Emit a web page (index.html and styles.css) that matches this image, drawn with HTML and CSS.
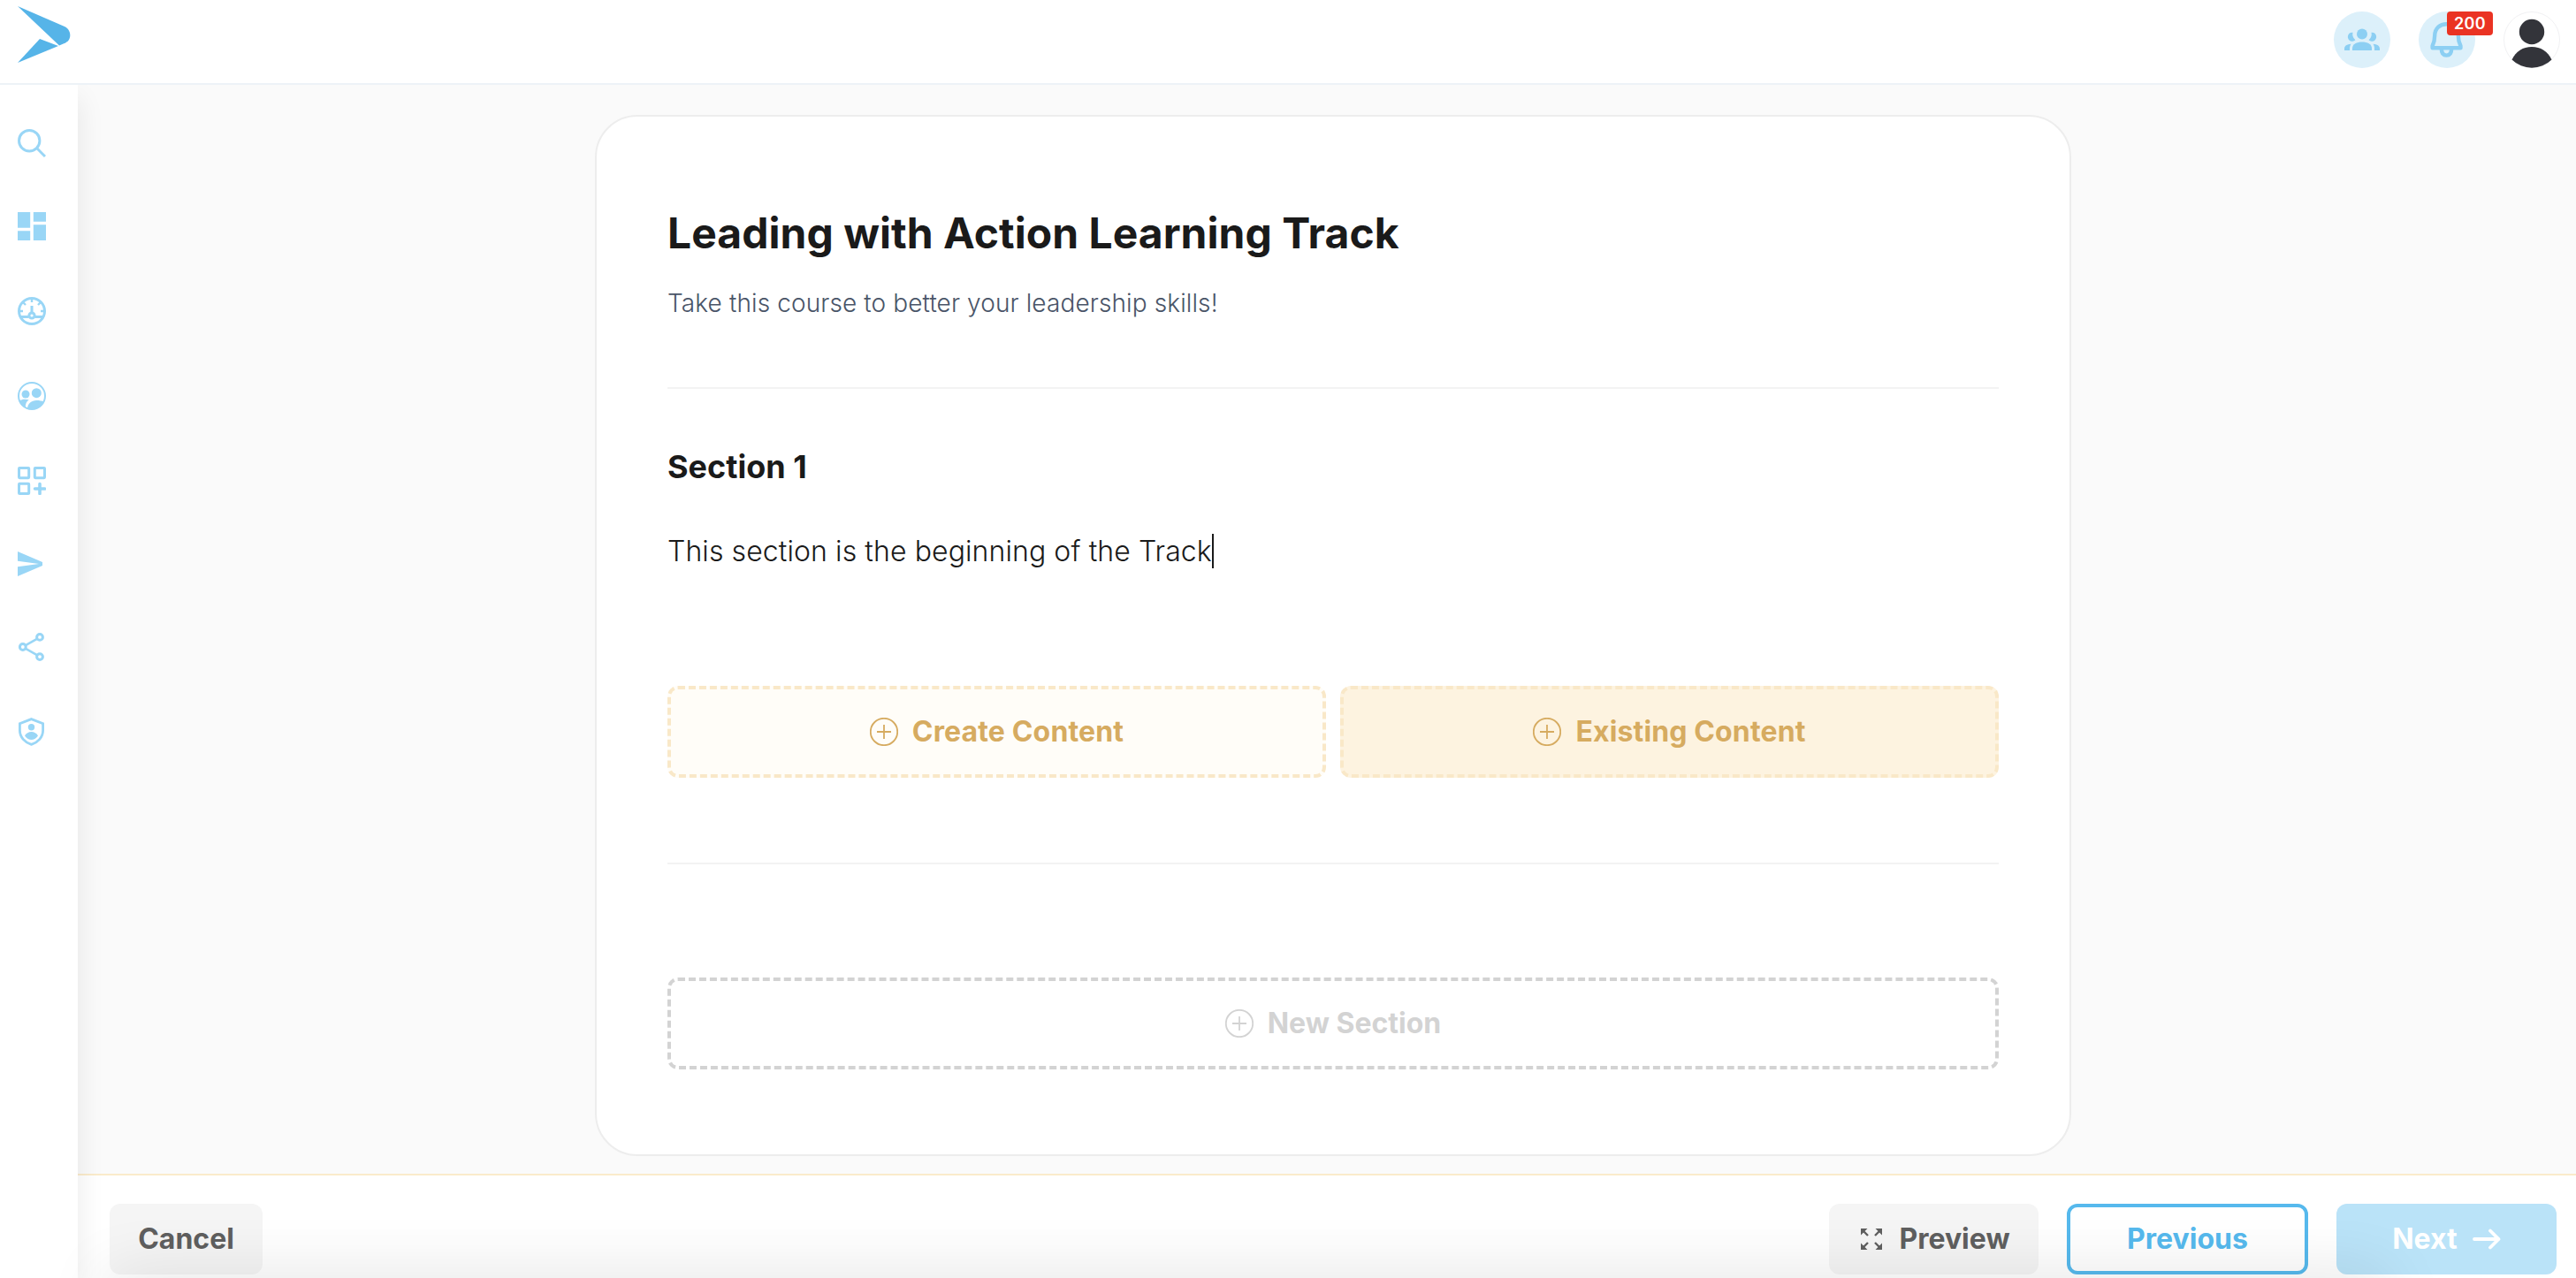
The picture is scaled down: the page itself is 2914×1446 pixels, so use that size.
FILE: index.html
```html
<!DOCTYPE html>
<html lang="en">
<head>
    <meta charset="UTF-8">
    <title>Leading with Action Learning Track</title>
    <link rel="stylesheet" href="styles.css">
</head>
<body>

    <header class="topbar">
        <a href="#" class="logo">
            <svg width="60" height="66" viewBox="0 0 60 66" fill="#56b4e8">
                <path d="M0 0 L53 23 C57 25 59.3 28.500 59.300 33 C59.300 37 57 40 54 41.500 L47 44.500 Z"/>
                <path d="M25 37 L46 45 L0 64 Z"/>
            </svg>
        </a>
        <div class="topbar-actions">
            <button class="round-button">
                <svg width="40" height="26" viewBox="0 0 40 26" fill="#8ccff3">
                    <circle cx="20" cy="6.500" r="6"/>
                    <path d="M9 25 V22.500 C9 18 14 15.500 20 15.500 S31 18 31 22.500 V25 Z"/>
                    <path d="M9.500 4.800 A5 5 0 1 0 12.400 13.300 A8.500 8.500 0 0 1 9.500 4.800 Z"/>
                    <path d="M30.500 4.800 A5 5 0 1 1 27.600 13.300 A8.500 8.500 0 0 0 30.500 4.800 Z"/>
                    <path d="M0 25 V23 C0 20 3 18 7.500 17.800 C6.500 19.500 6 21 6 23 V25 Z"/>
                    <path d="M40 25 V23 C40 20 37 18 32.500 17.800 C33.500 19.500 34 21 34 23 V25 Z"/>
                </svg>
            </button>
            <button class="round-button">
                <svg width="38" height="40" viewBox="0 0 38 40" fill="none" stroke="#8ccff3" stroke-width="4.400" stroke-linejoin="round">
                    <path d="M18.500 2.200 C11 2.200 5.500 7 5.200 15 C5.200 21 4.500 23 2.600 27 V29.300 H34.500 V27 C32.500 23 31.800 21 31.800 15 C31.500 7 26 2.200 18.500 2.200 Z"/>
                    <path d="M12.800 30 C12.800 35 15 37.600 18.500 37.600 S24.200 35 24.200 30"/>
                </svg>
                <span class="badge">200</span>
            </button>
            <button class="avatar">
                <svg width="64" height="64" viewBox="0 0 64 64">
                    <circle cx="32" cy="32" r="31.500" fill="#fff" stroke="#f1f1f3"/>
                    <circle cx="32" cy="23" r="14.200" fill="#33343a"/>
                    <path d="M9.500 54.500 C14 45 22 40 32 40 S50 45 54.500 54.500 A32 32 0 0 1 9.500 54.500 Z" fill="#33343a"/>
                </svg>
            </button>
        </div>
    </header>

    <div class="layout">
        <nav class="sidebar">
            <a href="#">
                <svg width="32" height="32" viewBox="0 0 32 32" fill="none" stroke="#99d6f6" stroke-width="3">
                    <circle cx="13.200" cy="13.200" r="11.700"/>
                    <path d="M21.500 21.500 L31 31"/>
                </svg>
            </a>
            <a href="#">
                <svg width="32" height="32" viewBox="0 0 32 32" fill="#99d6f6">
                    <path d="M0 0 H14.200 V17.800 H0 Z M17.800 0 H32 V10.700 H17.800 Z M17.800 14.200 H32 V32 H17.800 Z M0 21.300 H14.200 V32 H0 Z"/>
                </svg>
            </a>
            <a href="#">
                <svg width="32" height="32" viewBox="0 0 32 32" fill="none" stroke="#99d6f6" stroke-width="3">
                    <circle cx="16" cy="16" r="14.500"/>
                    <circle cx="16" cy="21" r="3.100"/>
                    <path d="M16 10 V18 M3 22.500 H12.500 M19.500 22.500 H29"/>
                    <path d="M16 2 V6 M2 16 H6 M26 16 H30 M6 6 L9 9 M26 6 L23 9" stroke-width="2.400"/>
                </svg>
            </a>
            <a href="#">
                <svg width="32" height="32" viewBox="0 0 32 32" fill="#99d6f6">
                    <circle cx="16" cy="16" r="15" fill="none" stroke="#99d6f6" stroke-width="2"/>
                    <circle cx="9" cy="14" r="4.500"/>
                    <circle cx="21.300" cy="12.700" r="5.500"/>
                    <path d="M2 21.500 C5 19.500 9 19.500 12.700 20.500 C9.800 22.500 8.700 25 8.700 29.500 C5.500 27.500 3 25 2 21.500 Z"/>
                    <path d="M11 30 C11.500 24.500 15.500 21 21.300 21 C24.500 21 27.500 21.500 29.500 22.500 C26.500 30 18 33 11 30 Z"/>
                </svg>
            </a>
            <a href="#">
                <svg width="32" height="32" viewBox="0 0 32 32" fill="none" stroke="#99d6f6" stroke-width="3">
                    <rect x="1.500" y="1.500" width="11.200" height="11.200" rx=".6"/>
                    <rect x="19.300" y="1.500" width="11.200" height="11.200" rx=".6"/>
                    <rect x="1.500" y="19.300" width="11.200" height="11.200" rx=".6"/>
                    <path d="M25 19.500 V30.500 M19.500 25 H30.500" stroke-width="3.600" stroke-linecap="round"/>
                </svg>
            </a>
            <a href="#">
                <svg width="32" height="28" viewBox="0 0 32 28" fill="#99d6f6">
                    <path d="M0 0 L28 12 V16 L0 28 V17.200 L24 14 L0 10.800 Z"/>
                </svg>
            </a>
            <a href="#">
                <svg width="32" height="32" viewBox="0 0 32 32" fill="none" stroke="#99d6f6" stroke-width="3">
                    <circle cx="5.800" cy="16" r="3.400"/>
                    <circle cx="25" cy="4.900" r="3.400"/>
                    <circle cx="25" cy="27.100" r="3.400"/>
                    <path d="M9 14.200 L21.800 6.800 M9 17.800 L21.800 25.200" stroke-width="2.600"/>
                </svg>
            </a>
            <a href="#">
                <svg width="32" height="32" viewBox="0 0 32 32" fill="#99d6f6">
                    <path d="M15.500 1.600 L28.600 6.600 V14.500 C28.600 22 23 28 15.500 30.400 C8 28 2.400 22 2.400 14.500 V6.600 Z" fill="none" stroke="#99d6f6" stroke-width="2.800"/>
                    <circle cx="15.500" cy="10.800" r="3.700"/>
                    <path d="M8 20.500 C9.500 17.500 12.500 16 15.500 16 S21.500 17.500 23 20.500 C21 23.500 18 25 15.500 25 S10 23.500 8 20.500 Z"/>
                </svg>
            </a>
        </nav>

        <div class="content">
            <main class="page">
                <div class="card">
                    <h1>Leading with Action Learning Track</h1>
                    <p class="description">Take this course to better your leadership skills!</p>
                    <hr>
                    <h2>Section 1</h2>
                    <p class="section-text">This section is the beginning of the Track<span class="caret"></span></p>
                    <div class="content-buttons">
                        <button class="dashed create">
                            <svg class="plus" width="32" height="32" viewBox="0 0 32 32"><circle cx="16" cy="16" r="15.200"/><path d="M16 8 V24 M8 16 H24"/></svg>
                            <span>Create Content</span>
                        </button>
                        <button class="dashed existing">
                            <svg class="plus" width="32" height="32" viewBox="0 0 32 32"><circle cx="16" cy="16" r="15.200"/><path d="M16 8 V24 M8 16 H24"/></svg>
                            <span>Existing Content</span>
                        </button>
                    </div>
                    <hr>
                    <button class="dashed new-section">
                        <svg class="plus" width="32" height="32" viewBox="0 0 32 32"><circle cx="16" cy="16" r="15.200"/><path d="M16 8 V24 M8 16 H24"/></svg>
                        <span>New Section</span>
                    </button>
                </div>
            </main>

            <footer class="footer">
                <button class="btn btn-gray"><span>Cancel</span></button>
                <div class="footer-right">
                    <button class="btn btn-gray btn-preview">
                        <svg width="24" height="24" viewBox="0 0 24 24" fill="#5f5f5f" stroke="#5f5f5f" stroke-width="2.400">
                            <path d="M0 0 H7.500 L0 7.500 Z M24 0 V7.500 L16.500 0 Z M0 24 V16.500 L7.500 24 Z M24 24 H16.500 L24 16.500 Z" stroke="none"/>
                            <path d="M3 3 L8 8 M21 3 L16 8 M3 21 L8 16 M21 21 L16 16"/>
                        </svg>
                        <span>Preview</span>
                    </button>
                    <button class="btn btn-outline"><span>Previous</span></button>
                    <button class="btn btn-next">
                        <span>Next</span>
                        <svg width="32" height="24" viewBox="0 0 32 24" fill="none" stroke="#fff" stroke-width="3.800" stroke-linecap="round" stroke-linejoin="round">
                            <path d="M2 12 H29.500 M20 2.500 L29.500 12 L20 21.500"/>
                        </svg>
                    </button>
                </div>
            </footer>
        </div>
    </div>

    <div class="bottom-shade"></div>

</body>
</html>
```
FILE: styles.css
```css
* {
    box-sizing: border-box;
}

body {
    font-family: Inter, sans-serif;
    margin: 0;
    height: 100vh;
    display: flex;
    flex-direction: column;
    overflow: hidden;
    background: #fafafa;
    color: #1a1a1a;
}

button {
    font-family: inherit;
    border: none;
    padding: 0;
    cursor: pointer;
}

svg {
    display: block;
    flex-shrink: 0;
}

/* Top bar */
.topbar {
    height: 96px;
    flex-shrink: 0;
    display: flex;
    justify-content: space-between;
    align-items: flex-start;
    padding: 0 18px 0 20px;
    background: #fff;
    border-bottom: 2px solid #edf2f7;
    position: relative;
    z-index: 3;
}

.logo {
    margin-top: 7px;
}

.topbar-actions {
    display: flex;
    gap: 32px;
    margin-top: 13px;
}

.round-button {
    width: 64px;
    height: 64px;
    border-radius: 50%;
    background: #dcf0fa;
    display: flex;
    justify-content: center;
    align-items: center;
    position: relative;
}

.badge {
    position: absolute;
    top: 0;
    left: 32px;
    width: 52px;
    height: 27px;
    border-radius: 4px;
    background: #ea3323;
    color: #fff;
    font-size: 18px;
    font-weight: 600;
    line-height: 27px;
    letter-spacing: 0.4px;
    text-align: center;
}

.avatar {
    background: none;
}

/* Layout */
.layout {
    flex: 1;
    display: flex;
    min-height: 0;
}

.sidebar {
    width: 88px;
    flex-shrink: 0;
    display: flex;
    flex-direction: column;
    gap: 64px;
    padding: 50px 0 0 20px;
    background: #fff;
    box-shadow: 0 16px 32px rgba(0, 0, 0, 0.09);
    position: relative;
    z-index: 2;
}

.sidebar a:first-child {
    margin-bottom: -2px;
}

.content {
    flex: 1;
    display: flex;
    flex-direction: column;
}

.page {
    flex: 1;
    display: flex;
    justify-content: center;
    align-items: flex-start;
    padding: 34px 0 0 14px;
}

.card {
    width: 1670px;
    height: 1178px;
    padding: 103px 80px 96px;
    background: #fff;
    border: 2px solid #ededed;
    border-radius: 48px;
}

.card h1 {
    margin: 0 0 33px;
    font-size: 48px;
    font-weight: 700;
    line-height: 58px;
    letter-spacing: 0.03px;
}

.description {
    margin: 0;
    font-size: 28px;
    font-weight: 300;
    line-height: 34px;
    letter-spacing: 0.11px;
    color: #4a5568;
}

.card hr {
    height: 2px;
    margin: 78px 0 66px;
    border: none;
    background: #f3f3f3;
}

.card h2 {
    margin: 0 0 55px;
    font-size: 36px;
    font-weight: 700;
    line-height: 44px;
}

.section-text {
    display: flex;
    margin: 0;
    font-size: 32px;
    font-weight: 300;
    line-height: 38px;
    letter-spacing: 0.09px;
}

.caret {
    width: 2px;
    height: 39px;
    margin-top: -1px;
    background: #1a1a1a;
}

/* Dashed buttons */
.content-buttons {
    display: flex;
    gap: 16px;
    margin-top: 133px;
}

.content-buttons + hr {
    margin: 96px 0 128px;
}

.dashed {
    flex: 1;
    width: 100%;
    height: 104px;
    display: flex;
    justify-content: center;
    align-items: center;
    gap: 16px;
    border: 4px dashed #f9e8c8;
    border-radius: 12px;
    font-size: 32px;
    font-weight: 700;
    color: #d6ab60;
}

.dashed span,
.btn span {
    padding-bottom: 2px;
}

.create {
    background: #fffdf8;
    letter-spacing: 0.15px;
}

.existing {
    background: #fdf3e0;
    letter-spacing: 0.13px;
}

.new-section {
    background: #fff;
    border-color: #d3d3d3;
    color: #d3d3d3;
}

.plus {
    fill: none;
    stroke: currentColor;
    stroke-width: 1.8;
}

/* Footer */
.footer {
    height: 118px;
    display: flex;
    justify-content: space-between;
    align-items: flex-start;
    padding: 32px 22px 0 36px;
    background: #fff;
    border-top: 2px solid #faebcb;
}

.footer-right {
    display: flex;
    gap: 32px;
}

.btn {
    height: 80px;
    display: flex;
    justify-content: center;
    align-items: center;
    border-radius: 12px;
    font-size: 32px;
    font-weight: 700;
}

.btn-gray {
    width: 173px;
    background: #f5f5f5;
    color: #5f5f5f;
}

.btn-preview {
    width: 237px;
    gap: 19px;
    padding-left: 4px;
}

.btn-outline {
    width: 273px;
    background: #fff;
    border: 4px solid #56b9ed;
    color: #56b9ed;
}

.btn-next {
    width: 249px;
    gap: 17px;
    background: #bae3f8;
    color: #fff;
}

/* Soft shade along the bottom edge of the window */
.bottom-shade {
    position: fixed;
    left: 120px;
    right: 214px;
    bottom: -40px;
    height: 40px;
    box-shadow: 0 0 72px rgba(0, 0, 0, 0.14);
    z-index: 4;
    pointer-events: none;
}
```
